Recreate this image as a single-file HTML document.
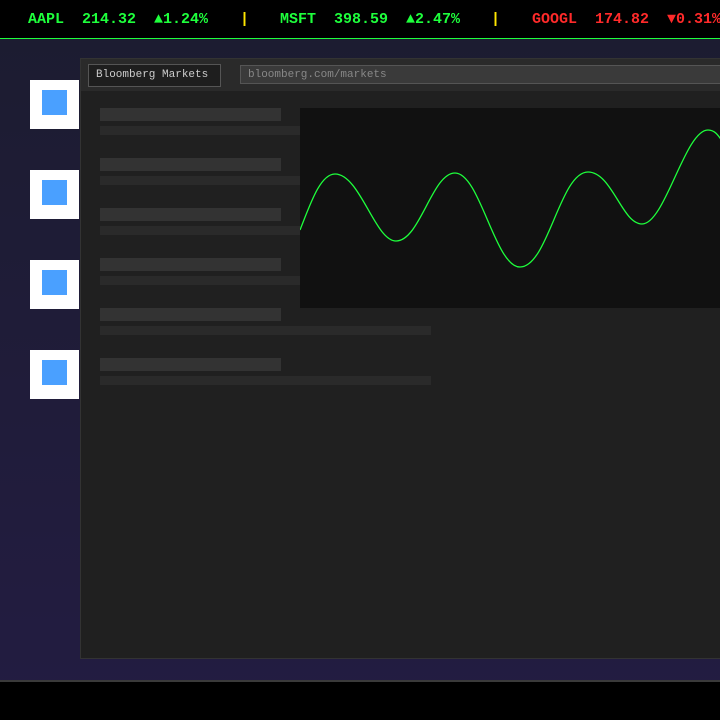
<!DOCTYPE html>
<html><head><meta charset="utf-8"><style>
*{margin:0;padding:0;box-sizing:border-box}
body{width:720px;height:720px;overflow:hidden;background:linear-gradient(#1c1c30,#231c42);position:relative;font-family:"Liberation Mono",monospace}
.tick{position:absolute;left:0;top:0;width:720px;height:39px;background:#000;border-bottom:1px solid #1eff3c;white-space:pre;font-size:15px;font-weight:bold;line-height:39px}
.tick span{position:absolute;top:0}
.g{color:#1eff3c}.r{color:#ff2a2a}.y{color:#ffe600}
.icon{position:absolute;left:30px;width:49px;height:49px;background:#fff}
.icon i{position:absolute;left:12px;top:10px;width:25px;height:25px;background:#4aa0ff}
.win{position:absolute;left:80px;top:58px;width:660px;height:601px;background:#202020;border:1px solid #333}
.bar{position:absolute;left:0;top:0;width:100%;height:32px;background:#2a2a2a}
.tab{position:absolute;left:7px;top:5px;width:133px;height:23px;border:1px solid #555;background:#1e1e1e;color:#ccc;font-size:11px;line-height:21px;padding-left:7px}
.url{position:absolute;left:159px;top:6px;width:520px;height:19px;border:1px solid #555;background:#3a3a3a;color:#888;font-size:11px;line-height:19px;padding-left:7px}
.l{position:absolute;left:19px;width:181px;height:13px;background:#333}
.s{position:absolute;left:19px;width:331px;height:9px;background:#2a2a2a}
.foot{position:absolute;left:0;top:680px;width:720px;height:40px;background:#000;border-top:2px solid #3a3a3a}
</style></head><body>
<div class="tick">
<span class="g" style="left:28px">AAPL</span><span class="g" style="left:82px">214.32</span><span class="g" style="left:154px">▲1.24%</span>
<span class="y" style="left:240px">|</span>
<span class="g" style="left:280px">MSFT</span><span class="g" style="left:334px">398.59</span><span class="g" style="left:406px">▲2.47%</span>
<span class="y" style="left:491px">|</span>
<span class="r" style="left:532px">GOOGL</span><span class="r" style="left:595px">174.82</span><span class="r" style="left:667px">▼0.31%</span>
</div>
<div class="icon" style="top:80px"><i></i></div>
<div class="icon" style="top:170px"><i></i></div>
<div class="icon" style="top:260px"><i></i></div>
<div class="icon" style="top:350px"><i></i></div>
<div class="win">
<div class="bar"><div class="tab">Bloomberg Markets</div><div class="url">bloomberg.com/markets</div></div>
<div class="l" style="top:49px"></div><div class="s" style="top:67px"></div>
<div class="l" style="top:99px"></div><div class="s" style="top:117px"></div>
<div class="l" style="top:149px"></div><div class="s" style="top:167px"></div>
<div class="l" style="top:199px"></div><div class="s" style="top:217px"></div>
<div class="l" style="top:249px"></div><div class="s" style="top:267px"></div>
<div class="l" style="top:299px"></div><div class="s" style="top:317px"></div>
</div>
<svg style="position:absolute;left:300px;top:108px" width="420" height="200" viewBox="300 108 420 200">
<rect x="300" y="108" width="420" height="200" fill="#111"/>
<path d="M300,230 C310,205 320,174 335,174 C360,174 375,241 396,241 C420,241 432,173 455,173 C480,173 495,267 520,267 C548,267 560,172 588,172 C612,172 622,224 642,224 C665,224 685,130 708,130 C715,130 718,135 725,145" fill="none" stroke="#1eff3c" stroke-width="1.3"/>
</svg>
<div class="foot"></div>
</body></html>
